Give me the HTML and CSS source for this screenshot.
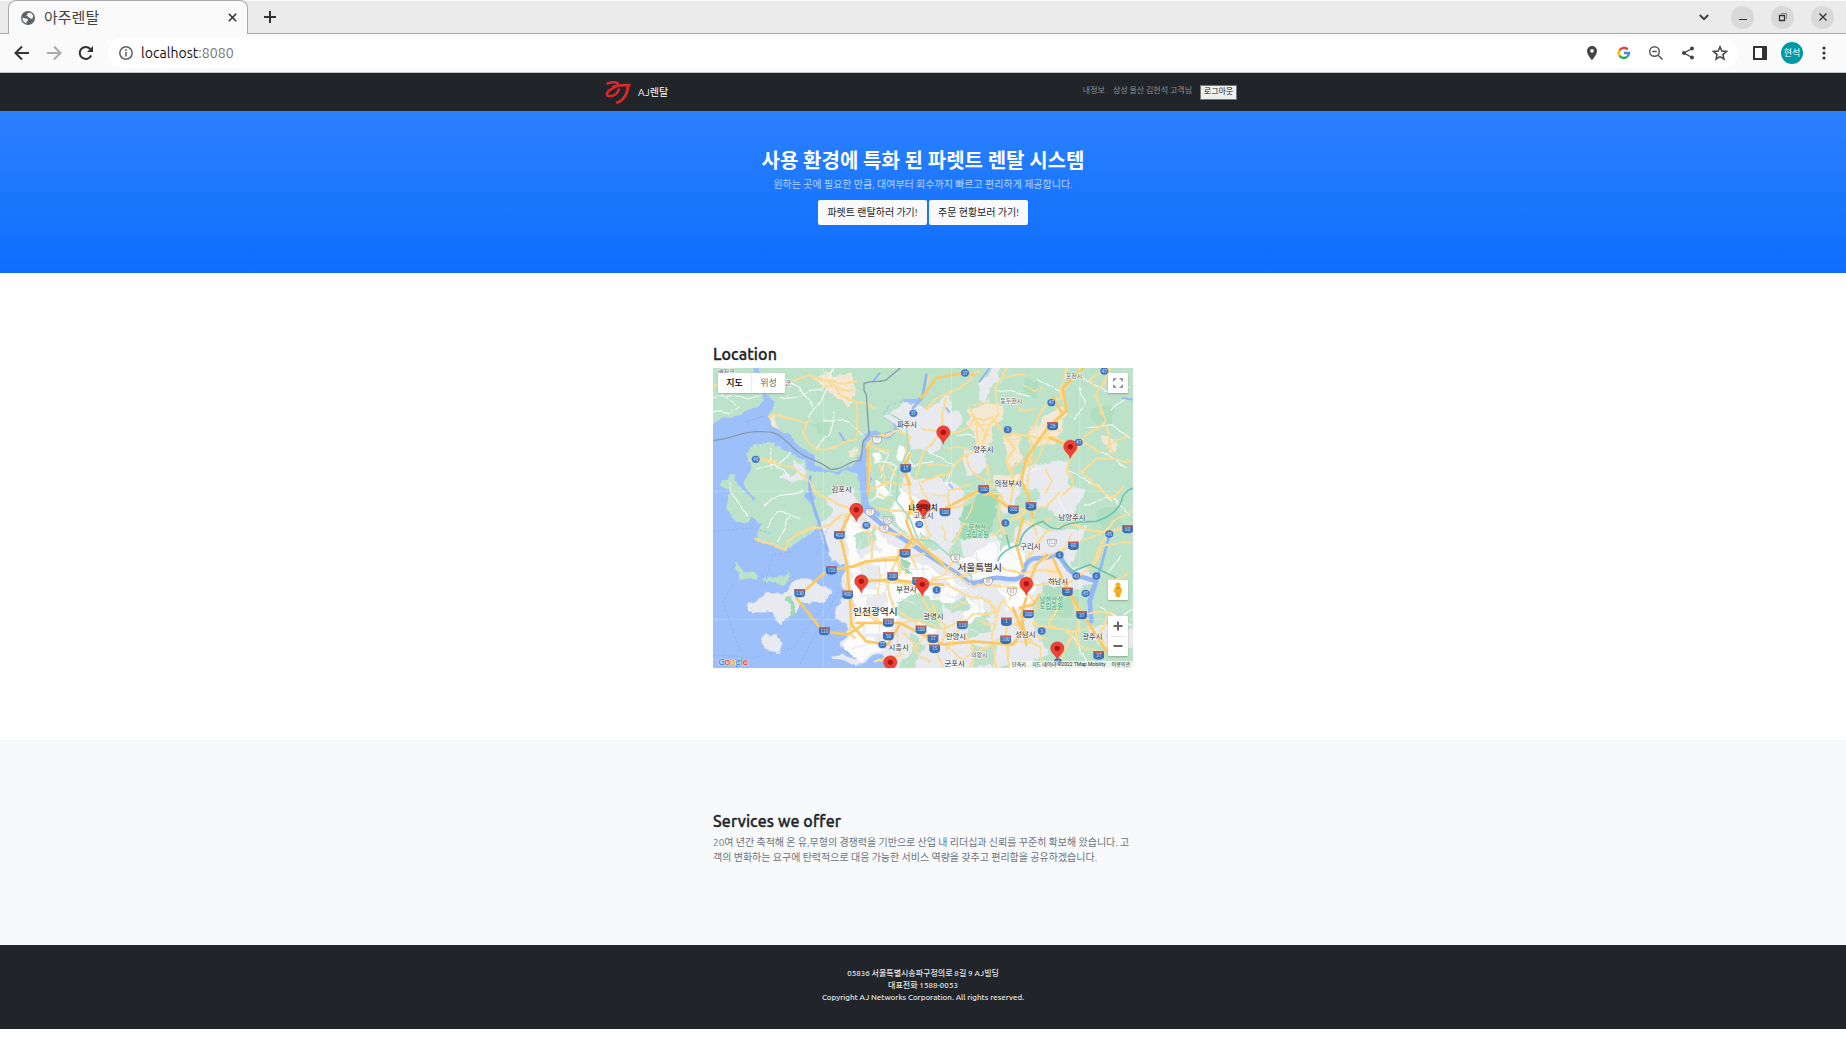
FILE: index.html
```html
<!DOCTYPE html>
<html lang="ko">
<head>
<meta charset="utf-8">
<title>아주렌탈</title>
<link rel="stylesheet" href="styles.css">
</head>
<body>
<div class="tabstrip">
  <div class="tab">
    <svg class="globe" width="14" height="14" viewBox="0 0 14 14"><circle cx="7" cy="7" r="7" fill="#5f6368"/><path d="M1.500 6.500l3 1 2 .2.5 1.800-1.600 1.200.2 1.700A5.500 5.500 0 0 1 1.500 6.500zM7 2l3-.2 2.300 3-1 3.200-2.400-.8-1.800-1.800-1.900-.4z" fill="#f2f2f2"/></svg>
    <span class="tab-title">아주렌탈</span>
    <svg class="close" width="9" height="9" viewBox="0 0 9 9"><path d="M.8.8l7.400 7.400M8.200.8L.8 8.200" stroke="#333" stroke-width="1.600"/></svg>
  </div>
  <svg class="plus" width="12" height="12" viewBox="0 0 12 12"><path d="M6 0v12M0 6h12" stroke="#333" stroke-width="2"/></svg>
  <div class="window-controls">
    <svg width="10" height="7" viewBox="0 0 10 7"><path d="M.8 1L5 5.200 9.200 1" fill="none" stroke="#3c3c3c" stroke-width="1.800"/></svg>
    <span class="round"><svg width="10" height="10" viewBox="0 0 10 10"><path d="M1 7.500h8" stroke="#333"/></svg></span>
    <span class="round"><svg width="10" height="10" viewBox="0 0 10 10" fill="none" stroke="#333"><path d="M3 1.500h5.500V7" stroke="#888"/><path d="M1.500 3.500h5v5h-5z" stroke-width="1.300"/></svg></span>
    <span class="round"><svg width="10" height="10" viewBox="0 0 10 10"><path d="M1.500 1.500l7 7M8.500 1.500l-7 7" stroke="#333" stroke-width="1.300"/></svg></span>
  </div>
</div>
<div class="toolbar">
  <div class="nav-icons">
    <svg width="16" height="16" viewBox="0 0 16 16" fill="none" stroke="#333" stroke-width="2"><path d="M15 8H2M8 1.500L1.500 8 8 14.500"/></svg>
    <svg width="16" height="16" viewBox="0 0 16 16" fill="none" stroke="#aaa" stroke-width="2"><path d="M1 8h13M8 1.500L14.500 8 8 14.500"/></svg>
    <svg width="16" height="16" viewBox="0 0 16 16"><path d="M13.200 10.500A6 6 0 1 1 12.300 4" fill="none" stroke="#333" stroke-width="2"/><path d="M15 1v6H9z" fill="#333"/></svg>
  </div>
  <div class="omnibox">
    <svg width="14" height="14" viewBox="0 0 14 14"><circle cx="7" cy="7" r="6.200" fill="none" stroke="#5f6368" stroke-width="1.500"/><path d="M7 6v4.500M7 3.300v1.600" stroke="#5f6368" stroke-width="1.600"/></svg>
    <span class="url">localhost<span>:8080</span></span>
    <div class="omni-actions">
      <svg width="16" height="16" viewBox="0 0 16 16"><path d="M8 1a5 5 0 0 0-5 5c0 3.600 5 9.300 5 9.300S13 9.600 13 6a5 5 0 0 0-5-5zm0 6.700a1.800 1.800 0 1 1 0-3.600 1.800 1.800 0 0 1 0 3.600z" fill="#444"/></svg>
      <svg width="16" height="16" viewBox="0 0 16 16" fill="none" stroke-width="2.400"><path d="M3.500 5.400A5 5 0 0 1 11.700 4.600" stroke="#ea4335"/><path d="M3.500 5.400a5 5 0 0 0 0 5.200" stroke="#fbbc05"/><path d="M3.500 10.600a5 5 0 0 0 7.800.9" stroke="#34a853"/><path d="M8 8h5a5 5 0 0 1-1.700 3.500" stroke="#4285f4"/></svg>
      <svg width="16" height="16" viewBox="0 0 16 16" fill="none" stroke="#555" stroke-width="1.500"><circle cx="6.500" cy="6.500" r="4.800"/><path d="M10.200 10.200l4.300 4.300M4.200 6.500h4.600"/></svg>
      <svg width="16" height="16" viewBox="0 0 16 16"><path d="M12 3.500L4 8l8 4.500" fill="none" stroke="#444" stroke-width="1.400"/><g fill="#444"><circle cx="12" cy="3.500" r="2"/><circle cx="4" cy="8" r="2"/><circle cx="12" cy="12.500" r="2"/></g></svg>
      <svg width="16" height="16" viewBox="0 0 16 16"><path d="M8 1.800l1.800 4.300 4.700.4-3.600 3.100 1.100 4.600L8 11.700l-4 2.500 1.100-4.600L1.500 6.500l4.700-.4z" fill="none" stroke="#444" stroke-width="1.500"/></svg>
    </div>
  </div>
  <svg class="panel" width="14" height="14" viewBox="0 0 14 14"><path d="M1 1h12v12H1z" fill="#fff" stroke="#333" stroke-width="2"/><path d="M9 1h4v12H9z" fill="#333"/></svg>
  <span class="avatar">현석</span>
  <svg class="dots" width="4" height="14" viewBox="0 0 4 14" fill="#333"><circle cx="2" cy="2" r="1.600"/><circle cx="2" cy="7" r="1.600"/><circle cx="2" cy="12" r="1.600"/></svg>
</div>

<nav class="site-nav">
  <div class="site-nav-inner">
    <svg class="logo" width="26" height="24" viewBox="0 0 26 24" fill="none" stroke="#d72a2a"><path d="M1.500 3C6 .8 12.500.6 13 3 13.200 5 9 6.500 5.500 8.600 1 11.500.8 15.300 4.800 15.300 9.500 15.300 14 11.500 13.800 7.500" stroke-width="2.500"/><path d="M7 6.500C12 3.900 18 3.700 25.500 4.200M22.800 5C23 12 19 19.500 11.200 22" stroke-width="2.800"/></svg>
    <a class="brand">AJ렌탈</a>
    <div class="links"><a>내정보</a><a>삼성 물산 김현석 고객님</a><button>로그아웃</button></div>
  </div>
</nav>
<header class="hero">
  <h1>사용 환경에 특화 된 파렛트 렌탈 시스템</h1>
  <p>원하는 곳에 필요한 만큼, 대여부터 회수까지 빠르고 편리하게 제공합니다.</p>
  <div class="buttons"><a>파렛트 랜탈하러 가기!</a><a>주문 현황보러 가기!</a></div>
</header>
<section class="location">
  <div class="column">
    <h2>Location</h2>
    <div class="map">
      <svg class="map-canvas" viewBox="0 0 1260 900">
        <defs>
          <!-- roughens straight coast and road segments -->
          <filter id="coast" filterUnits="userSpaceOnUse" x="-30" y="-30" width="1320" height="960" color-interpolation-filters="sRGB"><feTurbulence type="fractalNoise" baseFrequency=".022" numOctaves="3" seed="4"/><feDisplacementMap in="SourceGraphic" scale="38" xChannelSelector="R" yChannelSelector="G"/></filter>
          <filter id="winding" filterUnits="userSpaceOnUse" x="-30" y="-30" width="1320" height="960" color-interpolation-filters="sRGB"><feTurbulence type="fractalNoise" baseFrequency=".018" numOctaves="2" seed="9"/><feDisplacementMap in="SourceGraphic" scale="22" xChannelSelector="R" yChannelSelector="G"/></filter>
          <g id="pin"><path d="M0 36C-3 20-20 15-20 0A20 20 0 1 1 20 0C20 15 3 20 0 36z" fill="#ea4335" stroke="#c5221f"/><circle r="8" fill="#b31412"/></g>
          <g id="hw"><path d="M-16-12h32v18q-2 7-16 7t-16-7z" fill="#3d6fb6"/><path d="M-16-12h32v5h-32z" fill="#c4605c"/></g>
          <ellipse id="nr" rx="12" ry="11" fill="#4377c4"/>
          <path id="lr" d="M-13-10h26v12q-3 9-13 9t-13-9z" fill="#fff" stroke="#9a8585" stroke-width="2"/>
        </defs>
        <rect width="1260" height="900" fill="#9dc0fa"/>
        <g filter="url(#coast)">
        <!-- land -->
        <g fill="#bce3ca">
          <path d="M-30-30H105L128 42 150 62 162 88 150 104 112 122 62 148-30 165z"/>
          <path d="M125-30H652L640 40 618 90 575 97 528 110 518 135 545 180 470 200 445 212 440 265 425 285 385 305 350 305 300 275 265 250 225 205 187 185 166 145 178 95 160 60z"/>
          <path d="M105 262L120 235 160 222 205 228 235 255 275 275 292 330 280 385 300 425 315 475 290 500 218 545 168 530 125 510 148 470 108 440 130 390 98 350 112 300z"/>
          <path d="M18 335L62 322 82 362 122 390 126 440 92 468 55 430 38 405 50 370z"/>
          <path d="M60 592L90 605 135 620 130 632 85 635zM155 628L190 620 220 610 228 640 205 652 160 642z"/>
          <path d="M640-30H1290V930H535L520 840 440 790 412 720 395 585 360 583 330 530 322 470 302 420 290 350 285 300 350 318 430 305 452 380 470 440 510 440 462 400 462 215 520 200 556 185 520 140 530 110 575 100 600 118 625 90z"/>
        </g>
        <!-- built-up areas -->
        <g fill="#e9eaef">
          <path d="M330 385L420 360 450 430 540 470 640 540 760 640 830 650 880 740 860 930H535L500 850 450 890 360 878 355 865 430 868 385 820 402 775 370 760 366 735 390 700 385 640 395 585 360 583 328 530 322 470 360 430z"/>
          <path d="M105 712L155 685 222 665 265 627 302 635 352 672 340 700 275 705 250 730 215 770 180 738 120 735zM160 795L180 800 200 830 190 850 170 855 150 815z"/>
          <path d="M520 140L580 105 640 120 700 85 750 160 730 190 690 215 680 235 640 260 600 240 560 185zM195 335L250 310 245 280 272 280 285 340 230 345z"/>
          <path d="M580 310L640 340 680 330 760 360 760 410 740 480 720 520 860 500 940 460 1030 485 1120 475 1080 590 1160 640 1100 660 1000 650 950 740 1010 860 860 900 840 750 750 660 640 570 540 440z"/>
          <path d="M750 250L825 240 810 305 760 330zM945 290L1060 280 1065 350 1110 365 1080 460 1000 420 950 430 925 320zM840 330L930 320 900 430 870 440z"/>
          <path d="M790 40L860-10 870 40 850 50 820 95 800 90zM760 680L900 650 925 730 900 840 840 790 750 790zM1120 780L1190 765 1290 790V830L1180 850 1140 820z"/>
        </g>
        <g fill="#fbfbfc">
          <path d="M400 440L480 485 560 540 650 600 750 660 700 710 590 720 520 800 425 800 425 700 410 590zM730 580L870 510 940 560 930 630 840 640 780 640zM560 360L630 395 640 520 590 500 535 430z"/>
          <path d="M400 778L440 800 520 835 485 850 440 882 400 840zM860 660L970 640 950 720 890 720z"/>
          <path d="M470 255l30-8 10 25-25 20zM480 345l40 5 20 30-50 5zM560 240l30 10-5 40-30-15zM640 600l80 40-20 40-60-20zM620 730l60 20-20 50-50-20zM750 690l60 10 10 50-60 10z"/>
        </g>
        <g fill="#e9eaef"><path d="M430 505l50 5 25 40-60 20zM440 590l60 10-10 60-40-10zM460 690l60-20 10 50-60 20zM740 600l50-20 20 30-40 20zM650 620l50 30-30 40z"/></g>
        <g fill="#f4e8d5">
          <path d="M295 25L420 10 435 80 400 110 345 65zM765 120L830 95 880 130 840 180 830 240 795 240 770 180zM870 210L915 200 925 270 890 285zM950 180L1040 110 1060 135 1035 230 950 225zM170 150L190 135 205 185 185 180zM405 250h22v20h-22zM970 540L1020 570 1060 640 1010 635zM1175 205h25l5 45-20 10zM840 325l90-5-10 25-75 10z"/>
        </g>
        <g fill="#9fd9b5">
          <path d="M760 420L800 375 850 365 855 430 835 500 740 515zM740 455L790 440 845 490 820 515z"/>
          <path d="M555 570L590 575 595 620 560 610zM220 690l15-5 20 50-15 10z"/>
        </g>
        <g fill="#bce3ca">
          <path d="M420 500L480 480 495 520 450 540zM550 690L620 675 690 700 680 780 570 755 545 720zM590 790L630 830 610 900H555L600 850zM760 770L820 730 830 790 770 810zM700 560L740 510 750 575zM870 435L910 440 900 530 860 550zM780 830L850 830 840 900H780zM1000 770L1080 760 1130 840 1060 900 1010 850zM610 500l50 10 20 30-40 5zM690 700l60-10 20 30-60 20zM930 370l50-10 10 40-40 10z"/>
        </g>
        <g fill="#a9dcbc"><path d="M985 650L1045 655 1100 700 1075 750 1010 745zM300 170l60-10-20 60zM1140 110l60 20-10 50-60-20zM1150 430l60-20 20 60-60 20zM930 30l50 10-10 50-40-10zM60 20l40 10-20 30-30-5z" opacity=".7"/></g>
        </g>
        <!-- water -->
        <g fill="none" stroke="#92b7f4" stroke-linecap="round" stroke-linejoin="round">
          <path d="M455 425C510 480 570 510 620 545S700 590 770 645C810 650 820 625 860 630S925 640 932 610 950 570 985 570 1030 545 1050 580 1080 620 1150 640L1130 700 1135 760" stroke-width="14"/>
          <path d="M457 425C452 370 455 340 445 285M185 190L220 215 260 250" stroke="#9dc0fa" stroke-width="22"/>
          <path d="M292 325C280 375 310 430 322 475L345 550M1190 500L1160 610 1130 680M600 120L628 90 640 20" stroke-width="8"/>
          <path d="M830 0L800 40M1230 90l30 5M100 160L150 145M700 120l8 12M380 195L395 220M710 350l8 10M480 40l20-25" stroke-width="6"/>
        </g>
        <g filter="url(#winding)">
        <!-- local streets -->
        <g fill="none" stroke="#f3f7f3" stroke-width="3.500" stroke-linejoin="round">
          <path d="M0 90L60 75 110 90 145 75M0 130L50 140 80 115M20 70L70 110M190 90L250 85 300 65 330 60M290 150L330 85 360 0M210 30L260 55 300 120M330 160L400 155 450 200M300 240L350 200 370 130M130 300L190 285 230 330M150 410L200 380 270 370M160 480L200 430 265 450M190 520L230 440M170 240L180 300M230 255L200 290M50 345L70 400 105 445"/>
          <path d="M480 240L530 260 500 330M490 280L550 290 530 370M560 230L600 290 660 280M470 390L540 380M650 250L720 290 700 350M730 200L800 210M850 60L950 85M970 30L1040 70M1100 20L1180 70 1250 60M1120 180L1200 170 1250 210M1080 150L1120 110 1100 60M1120 230L1180 260 1240 300M1110 410L1200 385 1250 440M1030 390L1060 430M1200 130L1230 90M1180 480L1250 430M900 330L990 300M1220 560L1180 620M1060 310L1160 350 1200 400M1150 710L1220 750 1260 720M1080 800L1120 880M1160 780L1260 770"/>
        </g>
        <g fill="none" stroke="#e3e5ea" stroke-width="3">
          <path d="M420 620H520M420 650H510M440 680L510 690M440 510V580M470 500V650M520 580V710M500 760V840M450 760V820M480 820L420 845M560 690L610 710M580 640H680M570 600L650 610M630 560V700M680 600V690M700 680L780 720M720 650L850 750M800 650V740M840 650L920 690M760 600L850 590M770 560L870 610M790 540V620M850 520L860 620M880 550L930 580M650 450H720M670 400V520M600 380L690 410M570 440L620 480M620 720L730 760M720 760L810 800M670 820L760 850M870 760L940 790M890 740V860M930 700V840M960 760L990 840M990 470L1050 500M1040 570L1090 560"/>
        </g>
        <!-- main roads -->
        <g fill="none" stroke="#fbdc96" stroke-width="6.500" stroke-linejoin="round" stroke-linecap="round">
          <path d="M320 30L370 50 430 35M330 55L420 70M340 40L395 90 485 118M390 85L430 100 435 170 425 210 340 245 300 240 270 200 280 165 200 145 170 145M280 165L290 155M215 45L290 20 330 40M0 55L60 40"/>
          <path d="M105 275L190 280 270 320 310 375 380 410 430 430 470 480 560 500M215 545L130 515M218 545L225 520 300 480 350 470 385 440"/>
          <path d="M465 360V240L500 205 555 190 590 210 575 280 585 345 600 420 630 460 650 500 580 540 540 600 530 650 535 720 580 740 640 800 690 900M465 360L540 350 590 350M625 180L690 195 760 185 790 150 840 150 880 200 950 210 1020 210 1060 225 1100 220 1160 250M690 195L630 250 610 330M700 90L680 140 690 195M640 120L690 80 740 60 800 10"/>
          <path d="M770 120L790 150 800 240 760 260 780 310 840 360 900 350 960 260 950 200 1000 110 1040 90 1100 0M880 0L850 50 860 140 830 170 810 240M870 200L910 240 880 280 900 340M1060 0L1040 60 1060 130 960 240 940 360 960 440 970 500M1150 60L1130 30 1190 0M1190 0L1150 90 1180 160 1100 220 1060 310 1080 350 1050 380"/>
          <path d="M600 430L660 430 720 420 800 370 860 380 890 430 1000 420 1040 370M640 390L620 340 700 320 760 260M700 440L710 370 770 350M730 520L750 460 840 500 940 430M900 350L890 430 960 470 1010 450M860 380L855 450 880 510M940 570L1000 490 1070 470 1160 490 1250 480M960 590L1040 550 1160 500 1220 450 1260 420"/>
          <path d="M380 500L400 440 440 430M380 500L400 570 400 660 430 740 405 800 430 810M395 600L500 575 640 560M440 640H620M410 680L430 730 510 765H620L700 780 780 740 860 730M540 640L620 655 700 610 730 570M620 655L630 700 700 770 690 830 750 870 860 820 960 820M700 650L760 680 830 700 850 740 870 700 900 730 930 790 980 840 990 900"/>
          <path d="M560 500L620 520 700 600 780 660 860 650 930 660 970 710 940 760 880 770 890 900M640 640L760 620 860 600 930 620 970 600 1040 620 1070 660 1100 740 1090 830 1150 850M1060 650L1130 600 1190 490 1260 480M1130 600L1170 540 1260 520M1190 640L1250 620M1050 670L1010 770 1080 800 1030 900M960 650L1040 640M1110 740L1190 730 1160 800 1190 860M960 770L1080 790 1150 780"/>
          <path d="M555 780V860L480 880M640 800L600 840 650 880M520 770L480 740 430 740M740 770L700 850M760 800L790 860 770 900M850 740L840 830 850 900M560 620L555 550 600 520M470 570L480 500 440 480M1110 310L1150 270 1250 280M1105 310L1200 390 1230 360M1180 170L1200 260M820 290L830 340M480 420L560 430 610 440M480 240L530 250M520 360L500 290"/>
          <path d="M780 110L810 100 850 110M790 170L850 165M775 140L830 200M880 220L930 215M890 300L925 280 950 290M900 90L920 130 970 125M930 50L960 70 990 60M870 30L930 20M700 240L760 240M640 290L700 290M530 290L560 330M500 380L540 400M660 380L700 380M780 400L760 450M1000 300L1020 340 1000 370M990 170L1040 190M960 300L1010 210M1240 200L1180 240M650 20L640 70M560 580L580 620M500 600L495 680M590 560L610 600M660 700L670 740M570 800L620 840M720 720L760 700M800 760L840 770M900 660L890 700M960 800L1000 810M1020 700L1060 690M1080 500L1050 540M700 520L690 470" stroke-width="5"/>
        </g>
        </g>
        <!-- expressways -->
        <g fill="none" stroke="#fac965" stroke-width="8" stroke-linejoin="round" stroke-linecap="round">
          <path d="M250 690L340 610 390 600 420 595 460 580 550 575 600 510 580 460 600 400M250 690L330 790 405 800 450 770M410 440L380 500 400 580 410 680 415 770 460 820 525 830M440 640L540 635 620 645 690 650M780 20L750 15 670 30 625 90M700 420L810 360 900 430M960 450L945 380 925 340 940 270 1010 170 1060 130 1050 60 1110 0M600 510L690 590M930 450L910 530 930 600M900 720L930 790 900 830 780 820 690 830 560 765H430M940 690L925 740 940 830M1020 570L1060 660 1110 740 1180 850M525 830L560 770M1010 210L1070 235M1020 90L1050 140"/>
          <path d="M950 640L970 590 1000 560M920 720L960 710 980 680M590 350L570 300 590 260M465 380V240"/>
        </g>
        <g fill="none" stroke="#fff" stroke-opacity=".35" stroke-width="2"><path d="M0 370H1260M0 754H1260M331 0V900M715 0V900M1100 0V900"/></g>
        <g fill="none" stroke="#82ceb7" stroke-width="5">
          <path d="M535 140L580 165 585 250 555 310 550 400 590 450 615 515 660 520 740 590 775 625 775 640" stroke="#a5dbc9"/>
          <path d="M855 580Q860 550 920 530 925 480 990 460 1010 485 1040 482 1060 460 1150 460 1210 440 1225 400 1230 370 1260 360M920 530L890 540 880 500M1050 580L1080 610 1130 590 1210 630" stroke="#70c4ab"/>
        </g>
        <g fill="none" stroke="#899aa7" stroke-width="4"><path d="M0 217C60 212 75 193 130 191S190 195 220 220 240 250 300 275 340 308 370 303 405 278 443 278L450 220 468 202 460 80 453 68V46C485 35 505 45 520 35L562 0"/></g>
        <g fill="none" stroke="#86adf0" stroke-width="2" stroke-dasharray="9 5"><path d="M0 490L120 480 170 495M310 560L345 480M155 650L180 560 240 550M60 650L30 700 80 850M0 860L120 870 240 840 340 700M260 890L390 640M330 530L360 580"/></g>

        <g class="road-no">
          <g transform="translate(578 301)"><use href="#hw"/><text>17</text></g><g transform="translate(1019 174)"><use href="#hw"/><text>29</text></g><g transform="translate(812 364)"><use href="#hw"/><text>100</text></g><g transform="translate(696 432)"><use href="#hw"/><text>100</text></g><g transform="translate(901 425)"><use href="#hw"/><text>100</text></g><g transform="translate(954 415)"><use href="#hw"/><text>29</text></g><g transform="translate(379 501)"><use href="#hw"/><text>400</text></g><g transform="translate(576 556)"><use href="#hw"/><text>120</text></g><g transform="translate(355 607)"><use href="#hw"/><text>130</text></g><g transform="translate(260 675)"><use href="#hw"/><text>130</text></g><g transform="translate(539 625)"><use href="#hw"/><text>100</text></g><g transform="translate(614 640)"><use href="#hw"/><text>120</text></g><g transform="translate(404 680)"><use href="#hw"/><text>400</text></g><g transform="translate(334 789)"><use href="#hw"/><text>110</text></g><g transform="translate(526 764)"><use href="#hw"/><text>110</text></g><g transform="translate(526 804)"><use href="#hw"/><text>50</text></g><g transform="translate(624 785)"><use href="#hw"/><text>100</text></g><g transform="translate(660 812)"><use href="#hw"/><text>17</text></g><g transform="translate(665 842)"><use href="#hw"/><text>15</text></g><g transform="translate(748 771)"><use href="#hw"/><text>110</text></g><g transform="translate(880 761)"><use href="#hw"/><text>1</text></g><g transform="translate(878 815)"><use href="#hw"/><text>100</text></g><g transform="translate(946 738)"><use href="#hw"/><text>100</text></g><g transform="translate(1063 671)"><use href="#hw"/><text>35</text></g><g transform="translate(1106 741)"><use href="#hw"/><text>37</text></g><g transform="translate(1081 533)"><use href="#hw"/><text>60</text></g><g transform="translate(1244 483)"><use href="#hw"/><text>60</text></g><g transform="translate(1157 862)"><use href="#hw"/><text>37</text></g>
          <g transform="translate(756 15)"><use href="#nr"/><text>37</text></g><g transform="translate(1174 9)"><use href="#nr"/><text>47</text></g><g transform="translate(601 136)"><use href="#nr"/><text>37</text></g><g transform="translate(1015 104)"><use href="#nr"/><text>47</text></g><g transform="translate(884 185)"><use href="#nr"/><text>3</text></g><g transform="translate(1097 223)"><use href="#nr"/><text>47</text></g><g transform="translate(128 274)"><use href="#nr"/><text>48</text></g><g transform="translate(460 472)"><use href="#nr"/><text>48</text></g><g transform="translate(619 469)"><use href="#nr"/><text>39</text></g><g transform="translate(877 465)"><use href="#nr"/><text>3</text></g><g transform="translate(1189 498)"><use href="#nr"/><text>45</text></g><g transform="translate(1040 561)"><use href="#nr"/><text>6</text></g><g transform="translate(1090 624)"><use href="#nr"/><text>43</text></g><g transform="translate(1150 624)"><use href="#nr"/><text>6</text></g><g transform="translate(1118 676)"><use href="#nr"/><text>45</text></g><g transform="translate(671 666)"><use href="#nr"/><text>1</text></g><g transform="translate(508 830)"><use href="#nr"/><text>77</text></g><g transform="translate(986 789)"><use href="#nr"/><text>3</text></g><g transform="translate(1035 882)"><use href="#nr"/><text>3</text></g>
        </g>
        <g class="local-no">
          <g transform="translate(492 216)"><use href="#lr"/><text>77</text></g><g transform="translate(471 433)"><use href="#lr"/><text>77</text></g><g transform="translate(524 457)"><use href="#lr"/><text>357</text></g><g transform="translate(514 482)"><use href="#lr"/><text>88</text></g><g transform="translate(727 571)"><use href="#lr"/><text>30</text></g><g transform="translate(825 641)"><use href="#lr"/><text>88</text></g><g transform="translate(897 671)"><use href="#lr"/><text>61</text></g><g transform="translate(1017 524)"><use href="#lr"/><text>112</text></g>
        </g>
        <g class="place">
          <text x="40" y="19" class="minor">배천군</text><text x="226" y="51" class="minor">군</text><text x="582" y="177">파주시</text><text x="895" y="105" class="minor">동두천시</text><text x="1083" y="29" class="minor">포천시</text><text x="811" y="253">양주시</text><text x="885" y="355">의정부시</text><text x="386" y="372">김포시</text><text x="631" y="450">고양시</text><text x="1077" y="456">남양주시</text><text x="952" y="543">구리시</text><text x="800" y="610" class="major">서울특별시</text><text x="1035" y="648">하남시</text><text x="580" y="673">부천시</text><text x="487" y="742" class="major">인천광역시</text><text x="661" y="754">광명시</text><text x="729" y="813">안양시</text><text x="937" y="808">성남시</text><text x="1138" y="813">광주시</text><text x="557" y="847">시흥시</text><text x="725" y="893">군포시</text><text x="799" y="867" class="minor">의왕시</text>
          <g class="park"><text x="793" y="487">북한산</text><text x="793" y="507">국립공원</text><text x="1015" y="703">남한산성</text><text x="1015" y="724">도립공원</text></g>
        </g>
        <use href="#pin" x="691" y="193"/><use href="#pin" x="1072" y="236"/><use href="#pin" x="430" y="425"/><use href="#pin" x="632" y="415"/><use href="#pin" x="445" y="640"/><use href="#pin" x="628" y="649"/><use href="#pin" x="940" y="647"/><use href="#pin" x="1033" y="841"/><use href="#pin" x="532" y="883"/>
        <text x="630" y="427" class="here">나의 위치</text>
      </svg>
      <div class="map-type"><span class="on">지도</span><span>위성</span></div>
      <div class="map-btn full"><svg width="10" height="10" viewBox="0 0 10 10" fill="none" stroke="#777" stroke-width="1.300"><path d="M.8 3.300V.8h2.500M6.700.8h2.500v2.500M9.200 6.700v2.500H6.700M3.300 9.200H.8V6.700"/></svg></div>
      <div class="map-btn pegman"><svg width="10" height="16" viewBox="0 0 10 16"><circle cx="5" cy="3" r="2.500" fill="#f5b324"/><path d="M1.500 5.500h7l.8 5H8L7.200 15H2.800L2 10.500H.7z" fill="#f5b324"/><path d="M3 5.500h4L5 7.200zM5 10.500V15" fill="#d88a14" stroke="#d88a14" stroke-width=".6"/></svg></div>
      <div class="zoom"><svg width="20" height="40" viewBox="0 0 20 40"><path d="M5.500 10h9M10 5.500v9M5.500 30h9" stroke="#666" stroke-width="2"/><path d="M3 20.500h14" stroke="#e0e0e0"/></svg></div>
      <div class="google"><b>G</b><b>o</b><b>o</b><b>g</b><b>l</b><b>e</b></div>
      <div class="credits"><span>단축키</span><span>지도 데이터 ©2022 TMap Mobility</span><span>이용약관</span></div>
    </div>
  </div>
</section>
<section class="services">
  <div class="column">
    <h2>Services we offer</h2>
    <p>20여 년간 축적해 온 유,무형의 경쟁력을 기반으로 산업 내 리더십과 신뢰를 꾸준히 확보해 왔습니다. 고<br>객의 변화하는 요구에 탄력적으로 대응 가능한 서비스 역량을 갖추고 편리함을 공유하겠습니다.</p>
  </div>
</section>
<footer>
  <p>05836 서울특별시송파구정의로 8길 9 AJ빌딩</p>
  <p>대표전화 1588-0053</p>
  <p class="copy">Copyright AJ Networks Corporation. All rights reserved.</p>
</footer>
</body>
</html>
```
FILE: styles.css
```css
* { box-sizing: border-box; }
body { margin: 0; height: 1053px; overflow: hidden; background: #fff; color: #212529; font-family: Ubuntu, "Noto Sans", "Noto Sans CJK KR", sans-serif; font-size: 10px; line-height: 1.5; }
svg { display: block; flex: none; }
h1, h2, p { margin: 0; }

.tabstrip { height: 34px; display: flex; align-items: center; background: #ebebeb; border-top: 1px solid #fafafa; border-bottom: 1px solid #a9a9a9; padding-left: 8px; }
.tab { width: 240px; height: 34px; margin-top: -1px; margin-bottom: -1px; background: #fafafa; border: 1px solid #a9a9a9; border-bottom: 0; border-radius: 8px 8px 0 0; display: flex; align-items: center; padding: 0 10px 0 12px; z-index: 1; }
.tab-title { margin: -2px 0 0 9px; font-size: 15px; color: #444; flex: 1; font-family: "Noto Sans CJK KR", sans-serif; line-height: 20px; }
.plus { margin-left: 16px; }
.window-controls { margin-left: auto; display: flex; align-items: center; padding-right: 12px; gap: 17px; }
.window-controls > svg { margin-right: 5px; }
.round { width: 23px; height: 23px; border-radius: 50%; background: #d9d9d9; display: grid; place-items: center; }

.toolbar { height: 39px; background: #fafafa; border-bottom: 1px solid #c4c4c6; display: flex; align-items: center; padding-left: 14px; }
.nav-icons { display: flex; gap: 16px; }
.omnibox { width: 1630px; height: 30px; border-radius: 15px; background: #fff; margin-left: 14px; display: flex; align-items: center; padding: 0 10px 0 11px; }
.url { margin-left: 8px; font-size: 14.100px; color: #111; line-height: 20px; }
.url span { color: #767676; }
.omni-actions { margin-left: auto; display: flex; gap: 16px; }
.panel { margin-left: 15px; }
.avatar { margin-left: 14px; width: 22px; height: 22px; border-radius: 50%; background: #0097a7; color: #fff; font: 9px/22px "Noto Sans CJK KR", sans-serif; text-align: center; }
.dots { margin-left: 19px; }

.site-nav { height: 38px; background: #212529; }
.site-nav-inner { width: 636px; margin: 0 auto; height: 38px; display: flex; align-items: center; }
.logo { margin-top: 1px; }
.brand { color: #fff; font-size: 10px; margin-left: 7px; }
.links { margin-left: auto; display: flex; align-items: center; gap: 8px; font-size: 8px; color: #8e9092; padding-right: 4px; margin-top: -3px; }
.links button { font: inherit; line-height: 10px; color: #222; background: #efefef; border: 1px solid #767676; width: 37px; height: 15px; padding: 0; margin-top: 3px; white-space: nowrap; }

.hero { height: 162px; background: linear-gradient(180deg, #2b80ff, #0d6efd); text-align: center; padding-top: 38px; }
.hero h1 { font-size: 20px; line-height: 24px; font-weight: 700; color: #fff; }
.hero p { margin-top: 4px; color: #b6d3ff; line-height: 15px; }
.buttons { display: flex; justify-content: center; gap: 2px; margin-top: 8px; }
.buttons a { width: 109px; height: 25px; border-radius: 2px; background: #f8f9fa; line-height: 25px; color: #212529; }
.buttons a + a { width: 99px; }

.column { width: 420px; margin: 0 auto; }
.column h2 { font-size: 16px; line-height: 19px; font-weight: 500; letter-spacing: .1px; -webkit-text-stroke: .35px #212529; }
.location { height: 467px; padding-top: 72px; }
.map { position: relative; width: 420px; height: 300px; margin-top: 4px; overflow: hidden; }
.map-canvas { width: 420px; height: 300px; }
.map text { text-anchor: middle; font-family: "Noto Sans CJK KR", sans-serif; }
.road-no text { font-size: 14px; fill: #dce8fb; transform: translateY(5px); }
.local-no text { font-size: 13px; fill: #806f6f; transform: translateY(4px); }
.place text { font-size: 22px; font-weight: 500; fill: #4c4c50; stroke: #fff; stroke-width: 3px; paint-order: stroke; }
.place .minor { font-size: 18px; fill: #707074; }
.place .major { font-size: 29px; fill: #3c3c40; }
.place .park text { font-size: 19px; fill: #4fa878; stroke: #d3efdd; }
.map text.here { font-size: 22px; fill: #111; font-weight: 500; }
.map-type { position: absolute; left: 5px; top: 5px; display: flex; width: 67px; height: 20px; background: #fff; border-radius: 1px; box-shadow: 0 1px 2px #0003; font-size: 9px; line-height: 20px; text-align: center; color: #666; }
.map-type span { flex: 1; }
.map-type .on { color: #000; font-weight: 500; border-right: 1px solid #eee; }
.map-btn, .zoom { position: absolute; right: 5px; width: 20px; height: 20px; background: #fff; border-radius: 1px; box-shadow: 0 1px 2px #0004; display: grid; place-items: center; }
.full { top: 5px; }
.pegman { top: 212px; }
.zoom { top: 248px; height: 40px; }
.google { position: absolute; left: 5px; bottom: 0; font: 9.500px/13px "Open Sans", sans-serif; letter-spacing: -.4px; text-shadow: 0 0 1px #fff, 0 0 1px #fff; }
.google b { font-weight: 600; color: #4285f4; }
.google b:nth-child(2), .google b:nth-child(6) { color: #ea4335; }
.google b:nth-child(3) { color: #e9ab05; }
.google b:nth-child(5) { color: #34a853; }
.credits { position: absolute; right: 0; bottom: 0; height: 7px; display: flex; gap: 6px; padding: 0 3px 0 2px; background: #ffffffa8; font: 5px/7px Roboto, "Noto Sans CJK KR", sans-serif; color: #222; white-space: nowrap; }

.services { height: 205px; background: #f8f9fa; padding-top: 72px; }
.services p { margin-top: 4px; color: #6c757d; line-height: 15px; white-space: nowrap; }

footer { height: 84px; background: #212529; color: #e3e4e5; text-align: center; font-size: 8px; line-height: 12px; padding-top: 23px; font-weight: 500; }
footer .copy { letter-spacing: -.04px; }
```
